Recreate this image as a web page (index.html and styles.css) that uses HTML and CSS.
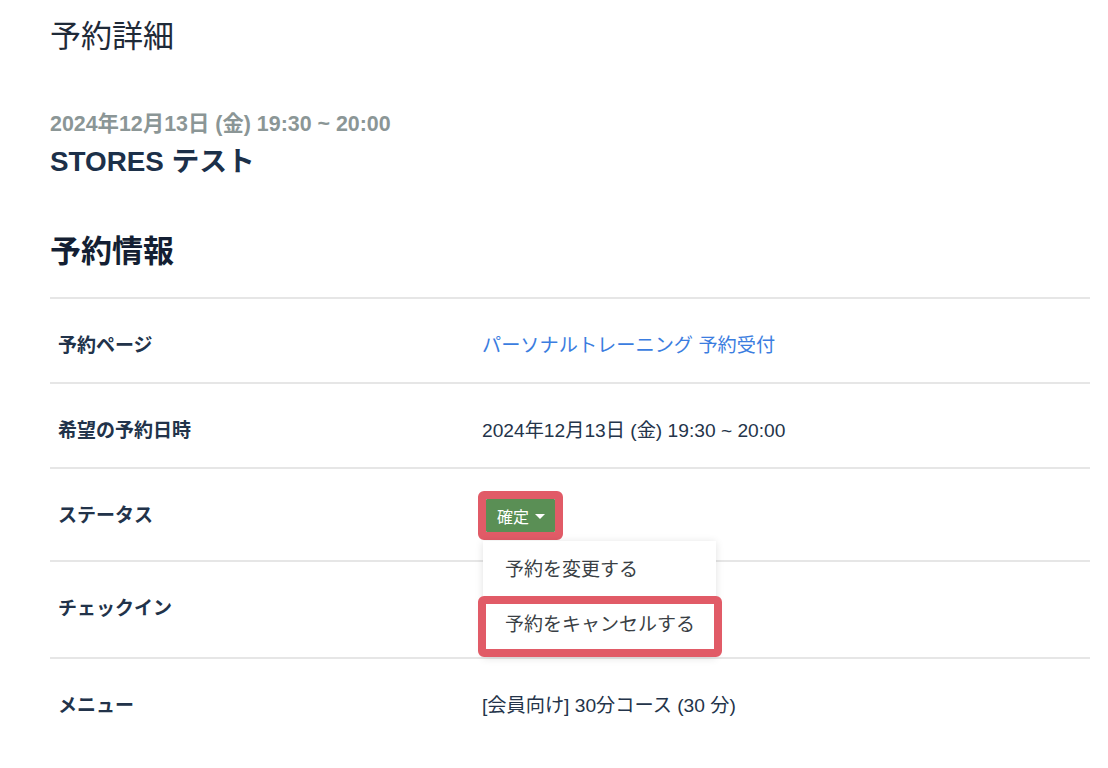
FILE: index.html
```html
<!DOCTYPE html>
<html lang="ja">
<head>
    <meta charset="UTF-8">
    <meta name="viewport" content="width=device-width, initial-scale=1.0">
    <title>予約詳細</title>
    <link rel="stylesheet" href="styles.css">
</head>
<body>
    <div class="page">
        <h1 class="page-title">予約詳細</h1>

        <p class="event-date">2024年12月13日 (金) 19:30 ~ 20:00</p>
        <p class="event-name">STORES テスト</p>

        <h2 class="section-title">予約情報</h2>

        <div class="info-table">
            <div class="row">
                <div class="label">予約ページ</div>
                <div class="value"><a class="link" href="#">パーソナルトレーニング 予約受付</a></div>
            </div>
            <div class="row">
                <div class="label">希望の予約日時</div>
                <div class="value">2024年12月13日 (金) 19:30 ~ 20:00</div>
            </div>
            <div class="row">
                <div class="label">ステータス</div>
                <div class="value value-status">
                    <div class="status">
                        <button class="status-button marked">確定<span class="caret"></span></button>
                        <ul class="dropdown">
                            <li class="dropdown-item">予約を変更する</li>
                            <li class="dropdown-item marked-item">予約をキャンセルする</li>
                        </ul>
                    </div>
                </div>
            </div>
            <div class="row">
                <div class="label">チェックイン</div>
                <div class="value value-checkin"><div class="checkin-slot"></div></div>
            </div>
            <div class="row row-last">
                <div class="label">メニュー</div>
                <div class="value">[会員向け] 30分コース (30 分)</div>
            </div>
        </div>
    </div>
</body>
</html>
```

FILE: styles.css
```css
body {
    margin: 0;
    background-color: #fff;
    font-family: "Liberation Sans", "Noto Sans CJK JP", sans-serif;
    color: #1e2d42;
}
.page {
    padding: 18px 18px 0 50px;
}
.page-title {
    margin: 0;
    font-size: 31px;
    font-weight: normal;
    line-height: 38px;
    color: #1f2a38;
}
.event-date {
    margin: 55px 0 0;
    font-size: 21.4px;
    font-weight: bold;
    line-height: 26px;
    color: #8b9696;
}
.event-name {
    margin: 8px 0 0;
    font-size: 27.8px;
    font-weight: bold;
    line-height: 34px;
    color: #1c3049;
}
.section-title {
    margin: 54px 0 0;
    font-size: 31px;
    font-weight: bold;
    line-height: 38px;
    color: #141f33;
}
.info-table {
    margin-top: 26px;
    width: 1040px;
}
.row {
    display: grid;
    grid-template-columns: 424px 1fr;
    border-top: 2px solid #e6e6e6;
}
.label, .value {
    padding: 33px 8px 22px;
    font-size: 19px;
    line-height: 28px;
}
.label {
    font-weight: bold;
    color: #22334a;
}
.value {
    color: #24344a;
    font-size: 19.2px;
}
.value-status {
    padding: 30px 8px 28px;
}
.value-checkin {
    padding: 30px 8px 25px;
}
.link {
    color: #3b7de0;
    text-decoration: none;
}
.checkin-slot {
    height: 40px;
}
.status {
    position: relative;
    display: inline-block;
}
.status-button {
    display: flex;
    align-items: center;
    gap: 6px;
    height: 33px;
    margin-left: 4px;
    padding: 0 10px 0 11px;
    border: none;
    border-radius: 1px;
    background-color: #5a8f55;
    color: #fff;
    font-family: inherit;
    font-size: 16px;
    cursor: pointer;
}
.caret {
    width: 0;
    height: 0;
    border-left: 5px solid transparent;
    border-right: 5px solid transparent;
    border-top: 5px solid #fff;
    margin-top: 2px;
}
.marked {
    position: relative;
}
.marked::after {
    content: "";
    position: absolute;
    top: -8px;
    left: -8px;
    right: -8px;
    bottom: -8px;
    border: 8px solid #e15b67;
    border-radius: 6px;
}
.dropdown {
    position: absolute;
    top: 42px;
    left: 1px;
    z-index: 2;
    width: 233px;
    margin: 0;
    padding: 2px 0 4px;
    list-style: none;
    background-color: #fff;
    box-shadow: 0 1px 8px rgba(0, 0, 0, 0.12);
}
.dropdown-item {
    position: relative;
    height: 55px;
    padding: 0 22px;
    font-size: 19px;
    line-height: 53px;
    color: #3a3f45;
    white-space: nowrap;
}
.marked-item::after {
    content: "";
    position: absolute;
    top: -2px;
    left: -5px;
    right: -6px;
    bottom: -4px;
    border: 8px solid #e15b67;
    border-radius: 6px;
}
```
